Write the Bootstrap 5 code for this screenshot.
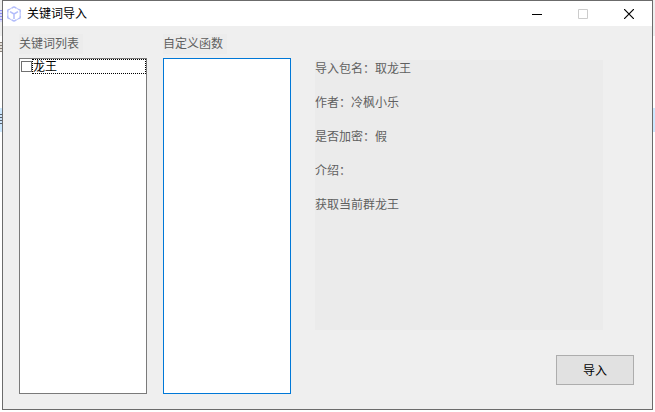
<!DOCTYPE html>
<html lang="zh-CN">
<head>
<meta charset="utf-8">
<meta name="viewport" content="width=device-width, initial-scale=1">
<title>关键词导入</title>
<link href="https://cdn.jsdelivr.net/npm/bootstrap@5.3.0/dist/css/bootstrap.min.css" rel="stylesheet">
<style>
body {
  font-family: "Liberation Sans", "Noto Sans CJK SC", sans-serif;
  font-size: 12px;
  line-height: 20px;
  color: #5f5f5f;
  background:
    repeating-linear-gradient(#8d8df5 0 1px, #d9d9fb 1px 3px) 0 10px / 2px 12px no-repeat,
    repeating-linear-gradient(#8a8178 0 1px, #e4e0dc 1px 3px) 0 42px / 2px 10px no-repeat,
    repeating-linear-gradient(#55606c 0 1px, #cce4fb 1px 3px) 0 114px / 2px 11px no-repeat,
    linear-gradient(#cce8ff, #cce8ff) 0 108px / 100% 24px no-repeat,
    linear-gradient(#efefef, #efefef) 0 0 / 100% 36px no-repeat,
    #fff;
}
.app-window { border: 1px solid #6b6b6b; background: #efefef; margin: 0 2px 2px; }
.title-bar { height: 25px; background: #fff; color: #000; padding-left: 3px; }
.title-text { font-size: 12px; line-height: 24px; font-weight: 400; margin: 0 0 0 5px; }
.caption-btn { width: 46px; height: 24px; border: 0; background: none; padding: 0; }
.caption-btn svg { display: block; margin: auto; }
.client { padding: 8px 18px 15px 16px; }
.list-col { flex: 0 0 128px; margin-right: 16px; }
.field-name { background: #ececec; width: 64px; height: 20px; margin-bottom: 4px; }
.list-box { background: #fff; border: 1px solid #7a7a7a; }
.list-box.focused { border-color: #0078d7; outline: 0; }
.entry { height: 15px; color: #000; padding-left: 1px; }
.entry input { appearance: none; width: 11px; height: 11px; border: 1px solid #707070; background: #fff; margin: 0; }
.entry label { border: 1px dotted #000; line-height: 15px; height: 15px; }
.detail-col { padding: 26px 0 9px 8px; }
.info { background: #ebebeb; height: 270px; margin-right: 31px; padding-top: 1px; }
.info p { line-height: 17px; margin-bottom: 17px; }
.import-btn { width: 78px; height: 30px; border: 1px solid #adadad; border-radius: 0; background: #e1e1e1; color: #000; font-size: 12px; line-height: 18px; padding: 2px 0 0; }
</style>
<script src="https://cdn.jsdelivr.net/npm/bootstrap@5.3.0/dist/js/bootstrap.bundle.min.js" defer></script>
</head>
<body class="vh-100 d-flex flex-column overflow-hidden">
<main class="app-window flex-grow-1 d-flex flex-column">
  <header class="title-bar d-flex align-items-center">
    <svg width="16" height="16" viewBox="0 0 16 16" fill="none" stroke="#b2bcfa" stroke-width="1.5" stroke-linejoin="round" aria-hidden="true">
      <path d="M5.8 2 8 .9 10.2 2M12.2 3.2 14.2 4.2V6.4M14.2 9.6V11.8L12.2 12.9M10.2 14 8 15.1 5.8 14M3.8 12.9 1.8 11.8V9.6M1.8 6.4V4.2L3.8 3.2"/>
      <path stroke-width="1" d="M5.8 2 3.8 3.2M10.2 2 12.2 3.2M14.2 6.4V9.6M1.8 6.4V9.6M3.8 12.9 5.8 14M12.2 12.9 10.2 14"/>
      <path d="M4 5.7 8 8 12 5.7M8 8V13"/>
    </svg>
    <h1 class="title-text">关键词导入</h1>
    <div class="d-flex ms-auto">
      <button type="button" class="caption-btn" aria-label="最小化"><svg width="10" height="10" shape-rendering="crispEdges"><path d="M0 5h10v1H0z"/></svg></button>
      <button type="button" class="caption-btn" aria-label="最大化" disabled><svg width="10" height="10"><path d="M.5.5h9v9h-9z" fill="none" stroke="#ccc"/></svg></button>
      <button type="button" class="caption-btn" aria-label="关闭"><svg width="10" height="10"><path d="M0 0 10 10M10 0 0 10" stroke="#000" stroke-width="1.2"/></svg></button>
    </div>
  </header>
  <div class="client flex-grow-1 d-flex">
    <section class="list-col d-flex flex-column">
      <div class="field-name" id="kw">关键词列表</div>
      <div class="list-box flex-grow-1" role="group" aria-labelledby="kw">
        <div class="entry d-flex align-items-center">
          <input type="checkbox" id="kw1">
          <label for="kw1" class="flex-grow-1">龙王</label>
        </div>
      </div>
    </section>
    <section class="list-col d-flex flex-column">
      <div class="field-name" id="fn">自定义函数</div>
      <div class="list-box focused flex-grow-1" role="listbox" tabindex="0" aria-labelledby="fn"></div>
    </section>
    <section class="detail-col flex-grow-1 d-flex flex-column">
      <div class="info">
        <p>导入包名：取龙王</p>
        <p>作者：冷枫小乐</p>
        <p>是否加密：假</p>
        <p>介绍：</p>
        <p>获取当前群龙王</p>
      </div>
      <button type="button" class="btn import-btn mt-auto align-self-end">导入</button>
    </section>
  </div>
</main>
</body>
</html>
